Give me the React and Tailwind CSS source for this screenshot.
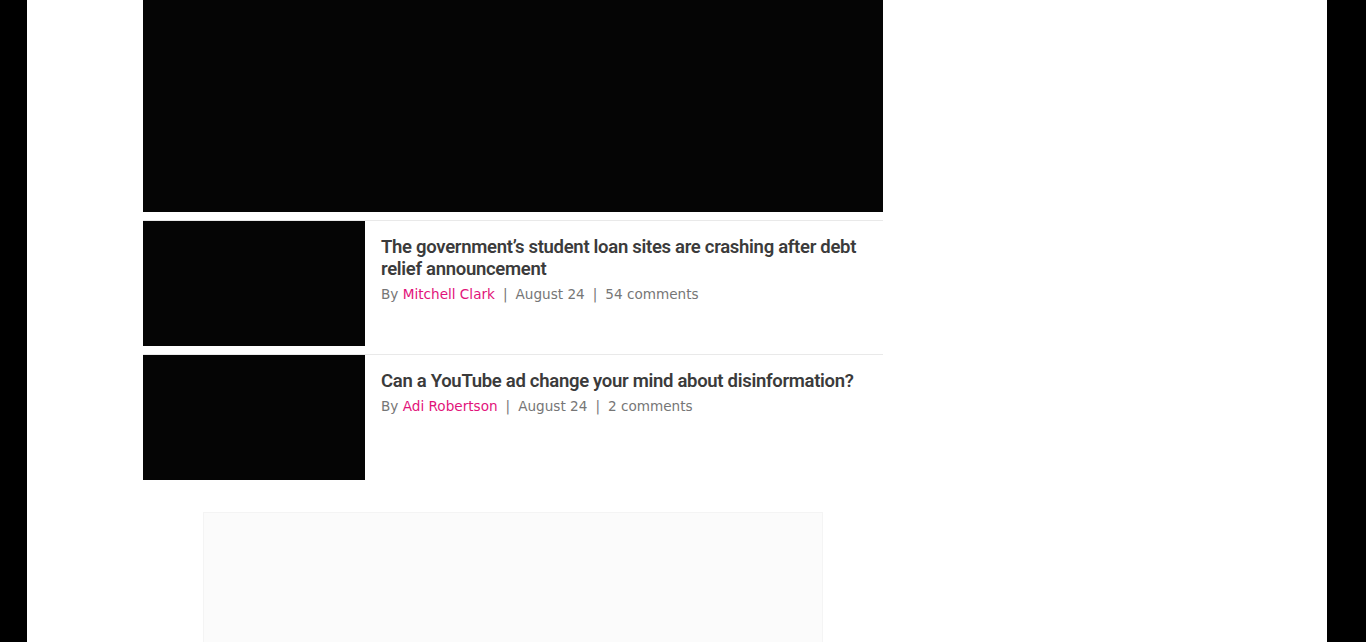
import React from 'react';

const stories = [
    {
        id: 1,
        title: 'The government’s student loan sites are crashing after debt relief announcement',
        author: 'Mitchell Clark',
        date: 'August 24',
        comments: '54 comments',
    },
    {
        id: 2,
        title: 'Can a YouTube ad change your mind about disinformation?',
        author: 'Adi Robertson',
        date: 'August 24',
        comments: '2 comments',
    },
];

const StoryRow = ({ story }) => (
    <div className="flex border-t border-[#e9e9e9] mt-2">
        <div className="w-[222px] h-[125px] shrink-0 bg-[#050505]"></div>
        <div className="flex-1 pl-4 pr-4 pt-[15px]">
            <h3 className="text-[18.5px] leading-[22px] font-semibold tracking-[-0.3px] text-[#3b3b3b] font-['Roboto',sans-serif]">
                {story.title}
            </h3>
            <div className="mt-[4px] text-[13.6px] leading-[20px] text-[#767676] font-['DejaVu_Sans',sans-serif]">
                By <span className="text-[#e2127a]">{story.author}</span>
                <span className="mx-[8px]">|</span>
                {story.date}
                <span className="mx-[8px]">|</span>
                {story.comments}
            </div>
        </div>
    </div>
);

const App = () => {
    return (
        <div className="min-h-screen bg-black">
            <div className="mx-[27px] w-[1300px] h-[642px] overflow-hidden bg-white pl-[116px]">
                <div className="w-[740px]">
                    <div className="h-[212px] bg-[#050505]"></div>
                    {stories.map((story) => (
                        <StoryRow key={story.id} story={story} />
                    ))}
                    <div className="mt-8 mx-[60px] h-[200px] bg-[#fbfbfb] border border-[#f4f4f4]"></div>
                </div>
            </div>
        </div>
    );
};

export default App;
